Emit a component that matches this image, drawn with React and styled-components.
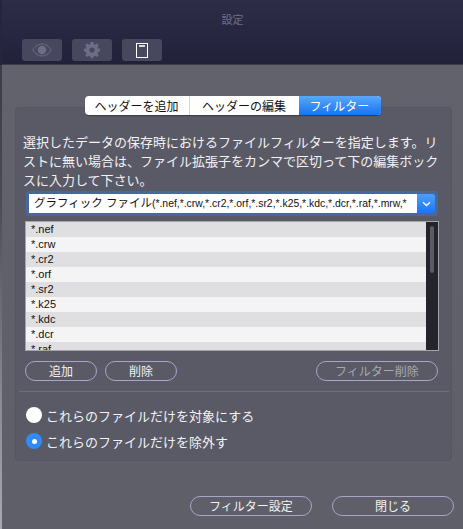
import React from 'react';
import styled, { createGlobalStyle } from 'styled-components';

const Global = createGlobalStyle`
  html, body { margin: 0; padding: 0; background: #62626c; overflow: hidden; }
  body { font-family: "Noto Sans CJK JP", "Liberation Sans", sans-serif; }
`;
const Page = styled.div`display: flex; width: 463px; height: 529px; overflow: hidden;`;
const EdgeStrip = styled.div`width: 2px; flex: none; background: linear-gradient(#26263a 0, #26263a 65px, #3c3c48 65px, #4a4a54 200px, #8a8a90 400px, #a9a9ad 529px);`;
const Main = styled.div`flex: 1; display: flex; flex-direction: column; min-width: 0;`;
const Header = styled.header`
  height: 65px; box-sizing: border-box; padding: 13px 0 0 20px; flex: none;
  background: linear-gradient(#2d2d48, #21213a);
  border-bottom: 1px solid #3c3c4c;
`;
const Title = styled.div`margin-left: -20px; text-align: center; font-size: 11px; line-height: 13px; color: #70708a; height: 13px;`;
const Toolbar = styled.div`display: flex; gap: 10px; margin-top: 13px;`;
const ToolButton = styled.button`
  width: 40px; height: 22px; padding: 0; border: 0; border-radius: 3px; background: #47475e;
  display: flex; align-items: center; justify-content: center;
  color: ${p => (p.$active ? '#fff' : '#6d6d88')};
`;
const Body = styled.div`flex: 1; padding: 31px 11px 0 13px; background: linear-gradient(#62626c, #5f5f69);`;
const Tabs = styled.div`
  position: relative; z-index: 1; display: flex; width: 296px; height: 19px; margin: 0 auto -8px; left: -1px;
  border-radius: 4px; background: #fff; box-shadow: 0 1px 1px rgba(0,0,0,.35);
`;
const Tab = styled.div`
  box-sizing: border-box; width: ${p => p.$w}px; font-size: 12px; line-height: 19px; text-align: center;
  color: ${p => (p.$active ? '#fff' : '#111')};
  border-right: ${p => (p.$divider ? '1px solid #d4d4d4' : '0')};
  ${p => p.$active && 'background: linear-gradient(#5aa8fa, #1574f5); border-radius: 0 4px 4px 0;'}
`;
const Panel = styled.section`
  box-sizing: border-box; height: 354px; padding: 24px 3px 0 4px; border-radius: 4px; background: #5a5a66;
  border: 1px solid #565661; display: flex; flex-direction: column;
`;
const Description = styled.p`margin: 0 0 0 3px; font-size: 13px; line-height: 19px; color: #f2f2f4; width: 424px; height: 57px;`;
const ComboRing = styled.div`
  display: flex; box-sizing: border-box; width: 412px; height: 25px; margin: 2px 0 0 6px; padding: 3px;
  border-radius: 4px; background: #48689c;
`;
const ComboText = styled.div`
  flex: 1; min-width: 0; background: #fff; padding-left: 5px; font-size: 11.5px; line-height: 19px; color: #111; white-space: nowrap; overflow: hidden;
  font-family: "Liberation Sans", "Noto Sans CJK JP", sans-serif;
`;
const ComboLatin = styled.span`font-size: 10.4px;`;
const ComboButton = styled.div`
  width: 18px; flex: none; border-radius: 0 3px 3px 0; background: linear-gradient(#4f9ff9, #1a76f4);
  display: flex; align-items: center; justify-content: center;
`;
const List = styled.div`
  box-sizing: border-box; display: flex; width: 414px; height: 130px; margin: 5px 0 0 5px;
  border: 1px solid #a5a5a8; overflow: hidden;
`;
const Rows = styled.div`flex: 1;`;
const Row = styled.div`
  height: 15px; padding-left: 5px; font-size: 11px; line-height: 15px; color: #111;
  font-family: "Liberation Sans", sans-serif;
  background: ${p => (p.$odd ? '#f4f4f4' : '#dfdfe1')};
`;
const Track = styled.div`width: 12px; flex: none; background: #25232b; padding: 4px; box-sizing: border-box;`;
const Thumb = styled.div`width: 4px; height: 47px; border-radius: 2px; background: #5b5b66;`;
const ButtonRow = styled.div`display: flex; gap: 8px; margin: 10px 0 0 5px; width: 413px;`;
const Pill = styled.button`
  box-sizing: border-box; width: ${p => p.$w}px; height: 20px; padding: 0; border: 1px solid #a9a4c8; border-radius: 10px;
  background: transparent; font-family: inherit; font-size: 12px; line-height: 18px;
  color: ${p => (p.$dim ? '#a8a8ae' : '#f2f2f4')};
  ${p => p.$end && 'margin-left: auto;'}
`;
const Divider = styled.hr`margin: 10px 2px 0 -1px; border: 0; height: 1px; background: #6f6f79; width: 430px;`;
const RadioRow = styled.label`display: flex; align-items: center; gap: 4px; height: 16px; margin-left: 6px; margin-top: ${p => p.$mt}px; font-size: 13px; color: #f2f2f4;`;
const Radio = styled.span`
  box-sizing: border-box; width: 16px; height: 16px; border-radius: 50%; flex: none;
  background: ${p => (p.$on ? '#2f8bf6' : '#fff')};
  display: flex; align-items: center; justify-content: center;
  &::after { content: ''; width: 5px; height: 5px; border-radius: 50%; background: ${p => (p.$on ? '#fff' : 'transparent')}; }
`;
const Footer = styled.footer`display: flex; justify-content: flex-end; gap: 20px; margin-top: 35px; margin-right: -2px;`;

const rows = ['*.nef', '*.crw', '*.cr2', '*.orf', '*.sr2', '*.k25', '*.kdc', '*.dcr', '*.raf'];

export default function App() {
  return (
    <Page>
      <Global />
      <EdgeStrip />
      <Main>
        <Header>
          <Title>設定</Title>
          <Toolbar>
            <ToolButton aria-label="表示">
              <svg width="20" height="14" viewBox="0 0 20 14" fill="none">
                <path d="M.8 7C3.300 3 6.400 1 10 1s6.700 2 9.200 6c-2.500 4-5.600 6-9.200 6S3.300 11 .8 7Z" stroke="currentColor" />
                <circle cx="10" cy="7" r="4.200" fill="currentColor" />
              </svg>
            </ToolButton>
            <ToolButton aria-label="設定">
              <svg width="16" height="16" viewBox="0 0 16 16">
                <path fill="currentColor" fillRule="evenodd" d="M6.600 0h2.800l.4 2.200 1.200.5L12.900 1.400l1.900 1.900-1.300 1.900.5 1.200 2 .4v2.800l-2 .4-.5 1.200 1.300 1.900-1.900 1.900-1.900-1.300-1.200.5-.4 2H6.600l-.4-2-1.200-.5-1.900 1.300-1.900-1.900 1.300-1.900-.5-1.200-2-.4V6.800l2-.4.5-1.200-1.300-1.900 1.900-1.900L5 2.700l1.200-.5ZM8 5.400a2.600 2.600 0 1 0 0 5.200 2.600 2.600 0 0 0 0-5.200Z" />
              </svg>
            </ToolButton>
            <ToolButton $active aria-label="ファイル">
              <svg width="12" height="15" viewBox="0 0 12 15" fill="none" stroke="currentColor">
                <rect x=".5" y=".5" width="11" height="14" />
                <path d="M3 3h6" strokeWidth="1.600" />
              </svg>
            </ToolButton>
          </Toolbar>
        </Header>
        <Body>
          <Tabs>
            <Tab $w={105} $divider>ヘッダーを追加</Tab>
            <Tab $w={109}>ヘッダーの編集</Tab>
            <Tab $w={82} $active>フィルター</Tab>
          </Tabs>
          <Panel>
            <Description>選択したデータの保存時におけるファイルフィルターを指定します。リストに無い場合は、ファイル拡張子をカンマで区切って下の編集ボックスに入力して下さい。</Description>
            <ComboRing>
              <ComboText>グラフィック ファイル<ComboLatin>(*.nef,*.crw,*.cr2,*.orf,*.sr2,*.k25,*.kdc,*.dcr,*.raf,*.mrw,*</ComboLatin></ComboText>
              <ComboButton>
                <svg width="9" height="6" viewBox="0 0 9 6" fill="none" stroke="#fff" strokeWidth="1.300">
                  <path d="M1 1.200 4.500 4.500 8 1.200" />
                </svg>
              </ComboButton>
            </ComboRing>
            <List>
              <Rows>
                {rows.map((r, i) => <Row key={r} $odd={i % 2 === 1}>{r}</Row>)}
              </Rows>
              <Track><Thumb /></Track>
            </List>
            <ButtonRow>
              <Pill $w={72}>追加</Pill>
              <Pill $w={72}>削除</Pill>
              <Pill $w={122} $dim $end>フィルター削除</Pill>
            </ButtonRow>
            <Divider />
            <RadioRow $mt={15}><Radio />これらのファイルだけを対象にする</RadioRow>
            <RadioRow $mt={10}><Radio $on />これらのファイルだけを除外す</RadioRow>
          </Panel>
          <Footer>
            <Pill $w={122}>フィルター設定</Pill>
            <Pill $w={122}>閉じる</Pill>
          </Footer>
        </Body>
      </Main>
    </Page>
  );
}
